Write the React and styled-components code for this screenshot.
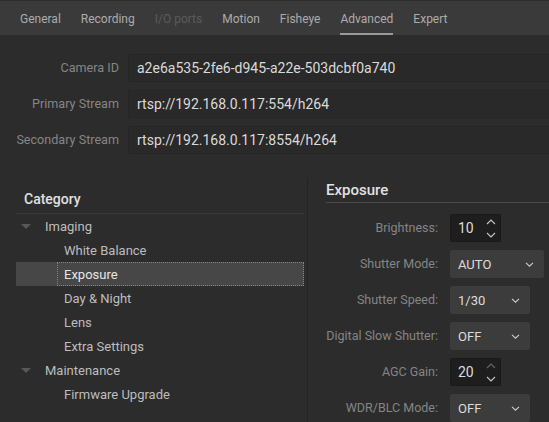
import React from 'react'
import styled, { createGlobalStyle } from 'styled-components'

const GlobalStyle = createGlobalStyle`
  html, body {
    margin: 0;
    padding: 0;
    background: #2c2c2c;
    overflow: hidden;
  }
  body {
    font-family: Roboto, "Liberation Sans", sans-serif;
  }
`

const Wrapper = styled.div`
  width: 549px;
  height: 422px;
  background: #2c2c2c;
  overflow: hidden;
  display: flex;
  flex-direction: column;
`

const TabBar = styled.div`
  display: flex;
  gap: 20px;
  padding-left: 20px;
  height: 35px;
  background: #3a3a3a;
  border-top: 1px solid #2e2e2e;
  box-sizing: border-box;
  flex-shrink: 0;
`

const Tab = styled.div`
  display: flex;
  align-items: center;
  font-size: 12px;
  color: ${p => (p.$disabled ? '#5a5a5a' : '#acacac')};
  border-top: 4px solid transparent;
  border-bottom: 2px solid ${p => (p.$active ? '#9a9a9a' : 'transparent')};
`

const Fields = styled.div`
  display: grid;
  grid-template-columns: 111px 1fr;
  column-gap: 9px;
  row-gap: 8px;
  padding: 19px 0 0 8px;
  margin-right: -6px;
`

const FieldLabel = styled.div`
  text-align: right;
  font-size: 12.6px;
  color: #858585;
  line-height: 28px;
  white-space: nowrap;
`

const FieldBox = styled.div`
  height: 28px;
  box-sizing: border-box;
  background: #292929;
  border: 1px solid #252525;
  border-radius: 2px;
  padding-left: 8px;
  font-size: 14px;
  color: #dadada;
  line-height: 26px;
`

const Lower = styled.div`
  display: flex;
  margin-top: 24px;
  flex: 1;
`

const CategoryPane = styled.div`
  width: 288px;
  margin-left: 16px;
  padding-top: 9px;
  flex-shrink: 0;
`

const CategoryHeader = styled.div`
  height: 27px;
  line-height: 24px;
  padding-left: 8px;
  font-size: 14px;
  font-weight: 500;
  color: #e0e0e0;
  border-bottom: 1px solid #393939;
  box-sizing: border-box;
`

const TreeRow = styled.div`
  display: flex;
  align-items: center;
  height: 24px;
  background: ${p => (p.$selected ? '#474747' : 'transparent')};
`

const Arrow = styled.div`
  width: 28px;
  display: flex;
  justify-content: flex-end;
  padding-right: 13px;
  box-sizing: border-box;
  flex-shrink: 0;
`

const TreeText = styled.div`
  flex: 1;
  height: 100%;
  display: flex;
  align-items: center;
  box-sizing: border-box;
  margin-left: ${p => (p.$child ? '41px' : '0')};
  padding-left: ${p => (p.$child ? '6px' : '0')};
  font-size: 13px;
  color: ${p => (p.$selected ? '#e6e6e6' : '#bdbdbd')};
  border: 1px dotted ${p => (p.$selected ? '#858585' : 'transparent')};
`

const Divider = styled.div`
  width: 1px;
  margin-left: 3px;
  background: #232323;
  flex-shrink: 0;
`

const SettingsPane = styled.div`
  flex: 1;
  padding-left: 18px;
`

const SettingsHeader = styled.div`
  height: 25px;
  line-height: 24px;
  font-size: 15px;
  font-weight: 500;
  color: #e2e2e2;
  border-bottom: 1px solid #4a4a4a;
  box-sizing: border-box;
`

const Form = styled.div`
  display: grid;
  grid-template-columns: 112px auto;
  justify-content: start;
  column-gap: 12px;
  row-gap: 8px;
  margin-top: 11px;
`

const FormLabel = styled.div`
  text-align: right;
  font-size: 12.5px;
  color: #858585;
  line-height: 28px;
  white-space: nowrap;
`

const SpinBox = styled.div`
  width: 51px;
  height: 28px;
  box-sizing: border-box;
  background: #1e1e1e;
  border: 1px solid #1a1a1a;
  border-radius: 2px;
  display: flex;
  align-items: center;
  justify-content: space-between;
  padding: 0 4px 0 7px;
  font-size: 14px;
  color: #dcdcdc;
`

const SpinArrows = styled.div`
  display: flex;
  flex-direction: column;
  gap: 7px;
`

const Combo = styled.div`
  width: ${p => p.$width}px;
  height: 28px;
  box-sizing: border-box;
  background: #3c3c3c;
  border-radius: 2px;
  display: flex;
  align-items: center;
  justify-content: space-between;
  padding: 0 10px 0 8px;
  font-size: 13px;
  color: #dcdcdc;
`

const UpIcon = ({ dim }) => (
  <svg width="10" height="6" viewBox="0 0 10 6">
    <polyline points="1,5 5,1 9,5" fill="none" stroke={dim ? '#666666' : '#c8c8c8'} strokeWidth="1.1" />
  </svg>
)

const DownIcon = () => (
  <svg width="10" height="6" viewBox="0 0 10 6">
    <polyline points="1,1 5,5 9,1" fill="none" stroke="#c8c8c8" strokeWidth="1.1" />
  </svg>
)

const Chevron = () => (
  <svg width="9" height="5" viewBox="0 0 9 5">
    <polyline points="1,0.8 4.5,4.2 8,0.8" fill="none" stroke="#cccccc" strokeWidth="1.1" />
  </svg>
)

const Triangle = () => (
  <svg width="10" height="5" viewBox="0 0 10 5">
    <polygon points="0,0 10,0 5,5" fill="#585858" />
  </svg>
)

const tabs = ['General', 'Recording', 'I/O ports', 'Motion', 'Fisheye', 'Advanced', 'Expert']

const fields = [
  ['Camera ID', 'a2e6a535-2fe6-d945-a22e-503dcbf0a740'],
  ['Primary Stream', 'rtsp://192.168.0.117:554/h264'],
  ['Secondary Stream', 'rtsp://192.168.0.117:8554/h264'],
]

const tree = [
  { label: 'Imaging', group: true },
  { label: 'White Balance' },
  { label: 'Exposure', selected: true },
  { label: 'Day & Night' },
  { label: 'Lens' },
  { label: 'Extra Settings' },
  { label: 'Maintenance', group: true },
  { label: 'Firmware Upgrade' },
]

const settings = [
  { label: 'Brightness:', type: 'spin', value: '10' },
  { label: 'Shutter Mode:', type: 'combo', value: 'AUTO', width: 94 },
  { label: 'Shutter Speed:', type: 'combo', value: '1/30', width: 80 },
  { label: 'Digital Slow Shutter:', type: 'combo', value: 'OFF', width: 80 },
  { label: 'AGC Gain:', type: 'spin', value: '20', upDim: true },
  { label: 'WDR/BLC Mode:', type: 'combo', value: 'OFF', width: 80 },
]

export default function App() {
  return (
    <Wrapper>
      <GlobalStyle />
      <TabBar>
        {tabs.map(t => (
          <Tab key={t} $active={t === 'Advanced'} $disabled={t === 'I/O ports'}>
            {t}
          </Tab>
        ))}
      </TabBar>

      <Fields>
        {fields.map(([label, value]) => (
          <React.Fragment key={label}>
            <FieldLabel>{label}</FieldLabel>
            <FieldBox>{value}</FieldBox>
          </React.Fragment>
        ))}
      </Fields>

      <Lower>
        <CategoryPane>
          <CategoryHeader>Category</CategoryHeader>
          {tree.map(item => (
            <TreeRow key={item.label} $selected={item.selected}>
              {item.group && (
                <Arrow>
                  <Triangle />
                </Arrow>
              )}
              <TreeText $child={!item.group} $selected={item.selected}>
                {item.label}
              </TreeText>
            </TreeRow>
          ))}
        </CategoryPane>
        <Divider />
        <SettingsPane>
          <SettingsHeader>Exposure</SettingsHeader>
          <Form>
            {settings.map(s => (
              <React.Fragment key={s.label}>
                <FormLabel>{s.label}</FormLabel>
                <div>
                  {s.type === 'spin' ? (
                    <SpinBox>
                      {s.value}
                      <SpinArrows>
                        <UpIcon dim={s.upDim} />
                        <DownIcon />
                      </SpinArrows>
                    </SpinBox>
                  ) : (
                    <Combo $width={s.width}>
                      {s.value}
                      <Chevron />
                    </Combo>
                  )}
                </div>
              </React.Fragment>
            ))}
          </Form>
        </SettingsPane>
      </Lower>
    </Wrapper>
  )
}
